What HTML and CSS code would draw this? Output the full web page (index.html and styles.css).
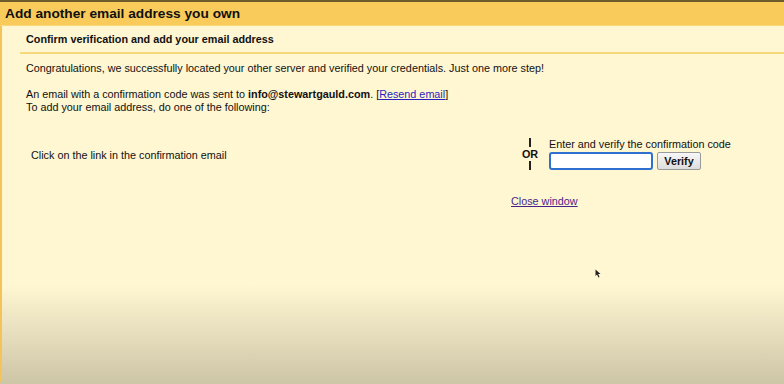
FILE: index.html
```html
<!DOCTYPE html>
<html lang="en">
<head>
  <meta charset="UTF-8">
  <title>Add another email address you own</title>
  <link rel="stylesheet" href="styles.css">
</head>
<body>

  <div class="title-bar">Add another email address you own</div>

  <div class="panel">
    <div class="step-title">Confirm verification and add your email address</div>

    <div class="content">
      <p class="congrats">Congratulations, we successfully located your other server and verified your credentials. Just one more step!</p>

      <p class="sent">
        An email with a confirmation code was sent to <b>info@stewartgauld.com</b>. [<a href="#" class="link">Resend email</a>]<br>
        To add your email address, do one of the following:
      </p>

      <div class="options">
        <div class="option-link">Click on the link in the confirmation email</div>
        <div class="or">
          <span class="bar"></span>
          <span class="or-text">OR</span>
          <span class="bar"></span>
        </div>
        <div class="option-code">
          <label>Enter and verify the confirmation code</label>
          <div class="code-row">
            <input type="text" class="code-input">
            <button class="verify">Verify</button>
          </div>
        </div>
      </div>

      <div class="close-row">
        <a href="#" class="close-link">Close window</a>
      </div>
    </div>
  </div>

  <!-- mouse pointer caught in the capture -->
  <svg class="pointer" width="6" height="9" viewBox="0 0 6 9">
    <path d="M0.5 0.5 L0.5 7 L2 5.5 L3.5 8.5 L4.5 8 L3.2 5 L5.5 5 Z" fill="#222"/>
  </svg>

</body>
</html>
```

FILE: styles.css
```css
html, body {
  height: 100%;
}

body {
  margin: 0;
  font-family: 'Liberation Sans', Arial, sans-serif;
  font-size: 10.8px;
  line-height: 13px;
  color: #111;
  background: linear-gradient(to bottom, #fff6d2 0, #fff6d2 285px, #ccc5a6 384px);
  border-top: 2px solid #6e5c2c;
  box-sizing: border-box;
  position: relative;
}

.title-bar {
  background: #f9cb5b;
  font-weight: bold;
  font-size: 13.7px;
  height: 23px;
  line-height: 24px;
  padding-left: 5px;
  border-bottom: 1px solid #fbd77e;
}

.panel {
  border-left: 2px solid #f2c45a;
  min-height: calc(100% - 26px);
  box-sizing: border-box;
}

.step-title {
  font-weight: bold;
  margin-left: 18px;
  padding: 7px 0 0 6px;
  height: 19px;
  border-bottom: 2px solid #f5d77c;
}

.content {
  padding-left: 24px;
}

.congrats {
  margin: 8px 0 0;
}

.sent {
  margin: 13px 0 0;
}

.link {
  color: #2a1fc0;
}

.options {
  display: flex;
  align-items: flex-start;
  margin-top: 24px;
}

.option-link {
  width: 486px;
  padding-left: 5px;
  padding-top: 11px;
}

.or {
  display: flex;
  flex-direction: column;
  align-items: center;
  width: 26px;
}

.bar {
  width: 2px;
  height: 9px;
  background: #222;
}

.or-text {
  font-weight: bold;
  margin: 1px 0 0;
}

.option-code {
  padding-left: 6px;
}

.option-code label {
  display: block;
}

.code-row {
  display: flex;
  gap: 4px;
  margin-top: 1px;
}

.code-input {
  width: 104px;
  height: 18px;
  padding: 0;
  border: 2px solid #2f6fd0;
  border-radius: 3px;
  background: #fff;
  box-sizing: border-box;
}

.verify {
  font-family: 'Liberation Sans', Arial, sans-serif;
  font-size: 10.8px;
  font-weight: bold;
  width: 44px;
  height: 18px;
  padding: 0;
  background: linear-gradient(#f7f7f7, #dddddd);
  border: 1px solid #9a9a9a;
  border-radius: 2px;
  color: #111;
}

.close-row {
  margin-top: 25px;
  padding-left: 485px;
}

.close-link {
  color: #4b1f8a;
}

.pointer {
  position: absolute;
  left: 595px;
  top: 267px;
}
```
